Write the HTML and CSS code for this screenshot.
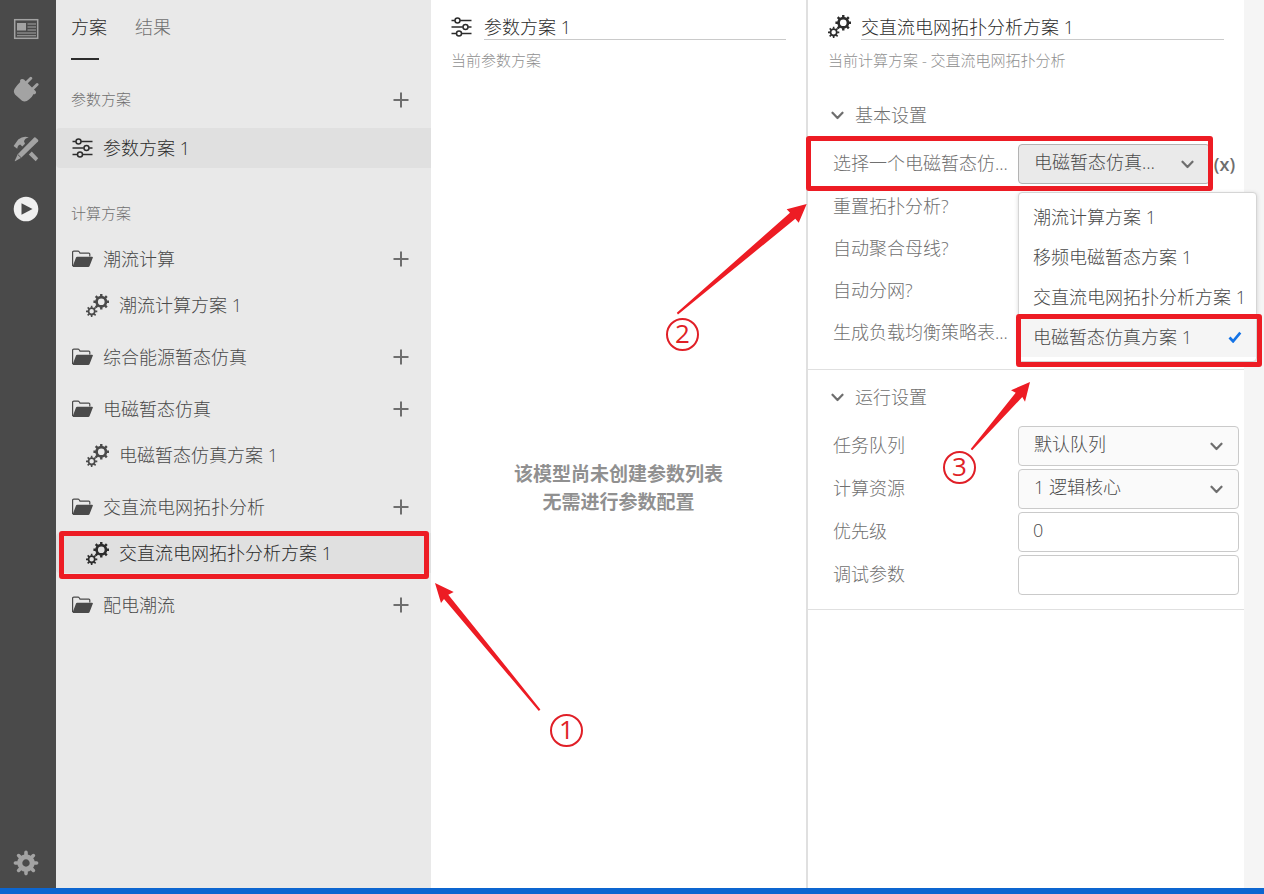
FILE: index.html
```html
<!DOCTYPE html>
<html lang="zh-CN">
<head>
<meta charset="utf-8">
<title>计算方案</title>
<link rel="stylesheet" href="styles.css">
</head>
<body>
<svg class="defs" aria-hidden="true">
  <symbol id="sliders" viewBox="0 0 21 20">
    <g fill="none" stroke="currentColor" stroke-width="1.5">
      <path d="M.5 3.5h3.4M9.1 3.5h11.4M.5 10h11.3M17.2 10h3.3M.5 16.5h4.8M10.7 16.5h9.8"/>
      <circle cx="6.5" cy="3.5" r="2.5"/><circle cx="14.5" cy="10" r="2.5"/><circle cx="8" cy="16.5" r="2.5"/>
    </g>
  </symbol>
  <symbol id="gears" viewBox="0 0 22 22">
    <g stroke="currentColor" fill="none">
      <g transform="translate(14.6 7.4)">
        <circle r="4.5" stroke-width="2.6"/>
        <path stroke-width="2.3" d="M0-5V-7.5M0 5V7.5M-5 0H-7.5M5 0H7.5M3.5-3.5L5.3-5.3M-3.5 3.5L-5.3 5.3M-3.5-3.5L-5.3-5.3M3.5 3.5L5.3 5.3"/>
      </g>
      <g transform="translate(5.4 16.6)">
        <circle r="3" stroke-width="1.7"/>
        <path stroke-width="1.5" d="M0-3.4V-5.4M0 3.4V5.4M-3.4 0H-5.4M3.4 0H5.4M2.4-2.4L3.8-3.8M-2.4 2.4L-3.8 3.8M-2.4-2.4L-3.8-3.8M2.4 2.4L3.8 3.8"/>
      </g>
    </g>
  </symbol>
  <symbol id="folder" viewBox="0 0 21 17">
    <path fill="none" stroke="currentColor" stroke-width="1.2" d="M.6 15.5V1.8Q.6.6 1.8.6H6q.8 0 1.2.7l.8 1.3h8.8q1 0 1 1V6"/>
    <path fill="currentColor" d="M5.2 6.2H20q1.2 0 .8 1l-3.2 8.4q-.4 1-1.4 1H1.4q-1 0-.6-1L4 7q.3-.8 1.2-.8z"/>
  </symbol>
  <symbol id="plus" viewBox="0 0 16 16"><path fill="none" stroke="currentColor" stroke-width="2" d="M8 .5v15M.5 8h15"/></symbol>
  <symbol id="chevron" viewBox="0 0 14 9"><path fill="none" stroke="currentColor" stroke-width="2.2" stroke-linecap="round" stroke-linejoin="round" d="M1.5 1.7L6.5 7l5-5.3"/></symbol>
</svg>
<div class="app">
  <nav class="rail" aria-label="主导航">
    <button aria-label="概览"><svg width="26" height="22" viewBox="0 0 26 22"><g fill="none" stroke="currentColor"><rect x="1.7" y="1.7" width="23" height="18.6" stroke-width="1.5"/><path d="M14.5 6H23M14.5 9H23M14.5 12H23M4 15H23M4 17.7H23" stroke-width="1.1"/></g><rect x="4" y="5" width="9" height="7.5" fill="currentColor"/></svg></button>
    <button aria-label="接口"><svg width="26" height="26" viewBox="0 0 26 26"><path fill="currentColor" d="M8 3.2Q9.6 2.4 11 3.6L22.7 15.3Q23.6 17 22.2 17.9Q21.4 18.4 20.6 18Q19.5 20.5 16 23.6Q12.5 26.6 9 24.8L2 18.5Q-.2 15.5 1.8 12.5Q4.5 8.5 7.2 6Q6.7 4.1 8 3.2z"/><path fill="none" stroke="currentColor" stroke-width="2.9" stroke-linecap="round" d="M13.5 6.5L17.8 2.2M19.8 12.8L24.1 8.5"/></svg></button>
    <button aria-label="工具"><svg width="26" height="26" viewBox="0 0 26 26"><g fill="currentColor"><path d="M.6 10L5.2 3.4Q10.5-.5 15.8 1.5Q11.8 2.4 11 5.2L12 7.7L9.3 10.5L7.2 8.4Q4.8 8.8 4.2 12.8z"/><path d="M21.2 1.6Q22 1 22.8 1.7L25 3.8Q25.7 4.6 25 5.4L8.2 21.8L2.1 25.2Q1.6 25.3 1.8 24.8L4.7 18.2z"/><path d="M15.8 18.6l3-3 6.4 6.6-2.5 3z"/></g><path fill="none" stroke="#4a4a4a" stroke-width=".9" d="M4.6 18.3l3.7 3.6"/></svg></button>
    <button class="active" aria-label="运行"><svg width="26" height="26" viewBox="0 0 26 26"><circle cx="13" cy="13" r="12.3" fill="currentColor"/><path fill="#4a4a4a" d="M8.5 7.2L19.5 13 8.5 18.8z"/></svg></button>
    <button class="settings" aria-label="设置"><svg width="26" height="26" viewBox="0 0 26 26"><g transform="translate(13 13)" fill="none" stroke="currentColor"><circle r="6.2" stroke-width="5"/><path stroke-width="3.6" stroke-linecap="round" d="M0-8V-10.6M0 8V10.6M-8 0H-10.6M8 0H10.6M5.7-5.7L7.4-7.4M-5.7 5.7L-7.4 7.4M-5.7-5.7L-7.4-7.4M5.7 5.7L7.4 7.4"/></g></svg></button>
  </nav>

  <aside class="sidebar">
    <div class="tabs" role="tablist">
      <button class="tab active" role="tab" aria-selected="true">方案</button>
      <button class="tab" role="tab" aria-selected="false">结果</button>
    </div>
    <div class="group-label"><h2>参数方案</h2><button class="add" aria-label="新建参数方案"><svg><use href="#plus"/></svg></button></div>
    <a href="#" class="row selected"><svg class="icon"><use href="#sliders"/></svg>参数方案 1</a>
    <div class="group-label second"><h2>计算方案</h2></div>
    <div class="tree">
      <section class="branch">
        <div class="row"><svg class="icon"><use href="#folder"/></svg><span>潮流计算</span><button class="add" aria-label="新建潮流计算"><svg><use href="#plus"/></svg></button></div>
        <a href="#" class="row child"><svg class="icon"><use href="#gears"/></svg>潮流计算方案 1</a>
      </section>
      <section class="branch">
        <div class="row"><svg class="icon"><use href="#folder"/></svg><span>综合能源暂态仿真</span><button class="add" aria-label="新建综合能源暂态仿真"><svg><use href="#plus"/></svg></button></div>
      </section>
      <section class="branch">
        <div class="row"><svg class="icon"><use href="#folder"/></svg><span>电磁暂态仿真</span><button class="add" aria-label="新建电磁暂态仿真"><svg><use href="#plus"/></svg></button></div>
        <a href="#" class="row child"><svg class="icon"><use href="#gears"/></svg>电磁暂态仿真方案 1</a>
      </section>
      <section class="branch">
        <div class="row"><svg class="icon"><use href="#folder"/></svg><span>交直流电网拓扑分析</span><button class="add" aria-label="新建交直流电网拓扑分析"><svg><use href="#plus"/></svg></button></div>
        <a href="#" class="row child selected"><svg class="icon"><use href="#gears"/></svg>交直流电网拓扑分析方案 1<i class="mark mark-row"></i></a>
      </section>
      <section class="branch">
        <div class="row"><svg class="icon"><use href="#folder"/></svg><span>配电潮流</span><button class="add" aria-label="新建配电潮流"><svg><use href="#plus"/></svg></button></div>
      </section>
    </div>
  </aside>

  <main class="params">
    <header class="head">
      <div class="title"><svg class="icon"><use href="#sliders"/></svg><input aria-label="参数方案名称" value="参数方案 1"></div>
      <p>当前参数方案</p>
    </header>
    <div class="empty"><p>该模型尚未创建参数列表</p><p>无需进行参数配置</p></div>
  </main>

  <section class="config">
    <header class="head">
      <div class="title"><svg class="icon"><use href="#gears"/></svg><input aria-label="计算方案名称" value="交直流电网拓扑分析方案 1"></div>
      <p>当前计算方案 - 交直流电网拓扑分析</p>
    </header>
    <section class="block basic">
      <h3><svg class="chev"><use href="#chevron"/></svg>基本设置</h3>
      <div class="fields">
        <div class="field target">
          <label for="emt">选择一个电磁暂态仿...</label>
          <div class="control open"><select id="emt"><option>电磁暂态仿真方案 1</option></select><svg class="chev"><use href="#chevron"/></svg></div>
          <button class="expr" aria-label="表达式">(x)</button>
          <i class="mark mark-field"></i>
          <ul class="menu" role="listbox" aria-label="方案列表">
            <li role="option">潮流计算方案 1</li>
            <li role="option">移频电磁暂态方案 1</li>
            <li role="option">交直流电网拓扑分析方案 1</li>
            <li role="option" class="chosen" aria-selected="true">电磁暂态仿真方案 1<svg width="14" height="12" viewBox="0 0 14 12"><path d="M1.5 6.5l3.6 3.8 7.2-8.6" fill="none" stroke="currentColor" stroke-width="2.7"/></svg><i class="mark mark-option"></i></li>
          </ul>
        </div>
        <div class="field"><span>重置拓扑分析?</span></div>
        <div class="field"><span>自动聚合母线?</span></div>
        <div class="field"><span>自动分网?</span></div>
        <div class="field"><span>生成负载均衡策略表...</span></div>
      </div>
    </section>
    <section class="block">
      <h3><svg class="chev"><use href="#chevron"/></svg>运行设置</h3>
      <div class="fields">
        <div class="field"><label for="queue">任务队列</label><div class="control"><select id="queue"><option>默认队列</option></select><svg class="chev"><use href="#chevron"/></svg></div></div>
        <div class="field"><label for="cores">计算资源</label><div class="control"><select id="cores"><option>1 逻辑核心</option></select><svg class="chev"><use href="#chevron"/></svg></div></div>
        <div class="field"><label for="priority">优先级</label><div class="control"><input id="priority" value="0"></div></div>
        <div class="field"><label for="debug">调试参数</label><div class="control"><input id="debug"></div></div>
      </div>
    </section>
  </section>

  <footer class="status"></footer>

  <div class="notes">
    <svg class="arrows" width="1264" height="894" viewBox="0 0 1264 894" aria-hidden="true">
      <path d="M435 583L453.7 592 448.3 594.7 540.4 709.4 538.8 711 444 599 441 603z"/>
      <path d="M806.7 204L786.7 209.3 790 212.7 676.8 312.8 678 314.6 795.3 218.7 798.7 222.7z"/>
      <path d="M1030 382L1011 390.3 1015.7 392.7 970.7 449 972.2 450.2 1022.3 397 1025 401.7z"/>
    </svg>
    <span class="num n1">1</span><span class="num n2">2</span><span class="num n3">3</span>
  </div>
</div>
</body>
</html>
```
FILE: styles.css
```css
* { box-sizing: border-box; }
body, h2, h3, p, ul { margin: 0; padding: 0; font-weight: 300; }
body {
  font: 300 18px/26px "Open Sans", "Noto Sans CJK SC", sans-serif;
  color: #4a4a4a;
  background: #fff;
}
button, input, select { font: inherit; color: inherit; border: 0; background: none; padding: 0; margin: 0; border-radius: 0; outline: 0; }
a { color: inherit; text-decoration: none; }
.defs { position: absolute; width: 0; height: 0; }

.app {
  position: relative;
  display: grid;
  grid-template-columns: 56px 375fr 375fr 458fr;
  grid-template-rows: 1fr 6px;
  min-height: 100vh;
  overflow: hidden;
}
.status { grid-column: 1 / -1; background: #0d66d0; }

/* icon rail */
.rail { display: flex; flex-direction: column; align-items: center; padding: 9px 4px 5px 0; gap: 20px; background: #4a4a4a; color: #a3a3a3; }
.rail button { display: flex; align-items: center; justify-content: center; width: 40px; height: 40px; }
.rail .active { color: #f0f0f0; }
.rail .settings { margin-top: auto; }

/* scheme list */
.sidebar { background: #e9e9e9; }
.tabs { display: flex; gap: 28px; padding: 0 15px; }
.tab { height: 60px; padding-bottom: 6px; color: #707070; position: relative; }
.tab.active { color: #2c2c2c; }
.tab.active::after { content: ""; position: absolute; left: 0; bottom: 0; width: 28px; height: 2px; background: #2c2c2c; }
.group-label { display: flex; align-items: center; justify-content: space-between; height: 40px; margin: 20px 22px 8px 15px; }
.group-label.second { margin: 26px 22px 5px 15px; }
.group-label h2 { padding-bottom: 2px; font-size: 15px; color: #707070; }
.add { display: flex; margin-left: auto; color: #6e6e6e; }
.add svg { width: 16px; height: 16px; }
.row { position: relative; display: flex; align-items: center; gap: 10px; height: 40px; padding: 0 22px 0 16px; border-radius: 4px 0 0 4px; }
.icon { flex: none; width: 21px; height: 20px; }
.row.selected { background: #e0e0e0; color: #2c2c2c; }
.tree { display: flex; flex-direction: column; gap: 12px; }
.child { margin-top: 6px; padding-left: 30px; }
.child .icon, .config .head .icon { width: 23px; height: 23px; }

/* panel headers */
.head { height: 88px; padding: 13px 20px 0; }
.title { display: flex; align-items: center; gap: 12px; color: #2c2c2c; }
.title input { flex: 1; min-width: 0; height: 27px; border-bottom: 1px solid #cacaca; }
.head p { margin-top: 7px; font-size: 15px; color: #909090; }
.params { display: flex; flex-direction: column; }
.empty { flex: 1; padding-top: 372px; text-align: center; font-size: 19px; line-height: 28px; color: #909090; }
.empty p { font-weight: 700; }

/* scheme settings */
.config { border-left: 2px solid #e0e0e0; border-right: 20px solid #f5f5f5; }
.config .title { gap: 10px; }
.block { padding: 7px 5px 14px 23px; border-bottom: 1px solid #e0e0e0; color: #707070; }
.block h3 { display: flex; align-items: center; gap: 10px; height: 40px; margin-bottom: 9px; font-size: 18px; }
.chev { flex: none; width: 14px; height: 9px; color: #6e6e6e; }
.fields { display: flex; flex-direction: column; gap: 3px; padding-left: 2px; }
.basic { padding-bottom: 17px; }
.basic .fields { gap: 2px; }
.field { position: relative; display: flex; align-items: center; height: 40px; }
.field label { flex: none; width: 185px; padding-bottom: 2px; white-space: nowrap; }
.control { position: relative; display: flex; flex: 1; min-width: 0; color: #4a4a4a; }
.control select, .control input {
  appearance: none;
  width: 100%;
  height: 40px;
  padding: 0 50px 4px 15px;
  border: 1px solid #cacaca;
  border-radius: 4px;
  background: #fafafa;
  text-overflow: ellipsis;
}
.control input { padding: 0 14px 5px; background: #fff; }
.control .chev { position: absolute; right: 15px; top: 16px; pointer-events: none; }
.control.open select { background: #eaeaea; border-color: #b3b3b3; }
.expr { width: 29px; text-align: center; font-weight: 600; color: #6e6e6e; }

.menu {
  position: absolute;
  z-index: 2;
  top: 48px;
  left: 185px;
  width: 239px;
  padding: 4px 0;
  list-style: none;
  white-space: nowrap;
  color: #4a4a4a;
  background: #fff;
  border: 1px solid #d5d5d5;
  border-radius: 4px;
  box-shadow: 0 1px 4px rgba(0, 0, 0, .15);
}
.menu li { position: relative; display: flex; align-items: center; justify-content: space-between; height: 40px; padding: 0 14px; }
.menu .chosen { background: #f5f5f5; }
.menu li svg { color: #1473e6; }

/* walkthrough marks */
.mark { position: absolute; border: 5px solid #ed1c24; border-radius: 3px; pointer-events: none; }
.mark-row { inset: -2px 2px -6px 3px; }
.mark-field { inset: -8px 26px -7px -27px; z-index: 1; }
.mark-option { inset: -3px -6px -10px -3px; }
.notes { position: absolute; inset: 0; z-index: 3; pointer-events: none; color: #e01f27; }
.arrows { display: block; fill: #ed1c24; }
.num { position: absolute; display: flex; align-items: center; justify-content: center; width: 33px; height: 33px; padding-bottom: 3px; border: 2px solid; border-radius: 50%; font-size: 26px; line-height: 26px; font-weight: 400; }
.n1 { left: 550px; top: 714px; }
.n2 { left: 666px; top: 318px; }
.n3 { left: 943px; top: 451px; }
```
